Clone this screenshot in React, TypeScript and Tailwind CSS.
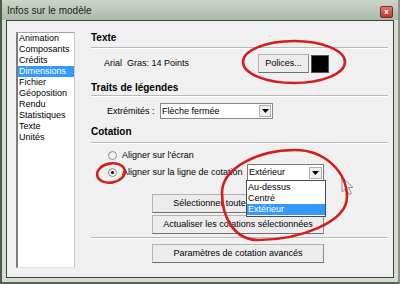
import React from "react";

const items = [
  "Animation",
  "Composants",
  "Crédits",
  "Dimensions",
  "Fichier",
  "Géoposition",
  "Rendu",
  "Statistiques",
  "Texte",
  "Unités",
];

function Arrow() {
  return (
    <svg width="7" height="4" viewBox="0 0 7 4">
      <polygon points="0,0 7,0 3.5,4" fill="#000" />
    </svg>
  );
}

function Separator() {
  return <div className="h-[2px] w-full border-t border-t-[#b9b9b9] border-b border-b-white" />;
}

function Heading({ children }: { children: React.ReactNode }) {
  return <div className="h-[12px] text-[10px] leading-[12px] font-bold text-black">{children}</div>;
}

function Btn({ children, className }: { children: React.ReactNode; className: string }) {
  return (
    <div
      className={
        "flex items-center justify-center whitespace-nowrap overflow-hidden text-[9px] leading-[11px] text-black bg-[#ececec] border border-[#b4b4b4] border-b-[#6f6f6f] border-r-[#8c8c8c] " +
        className
      }
    >
      {children}
    </div>
  );
}

function Radio({ checked }: { checked?: boolean }) {
  return (
    <div className="w-[9px] h-[9px] rounded-full border border-[#8d8d8d] bg-gradient-to-br from-[#e4e4e4] to-white flex items-center justify-center">
      {checked && <div className="w-[3px] h-[3px] rounded-full bg-black" />}
    </div>
  );
}

export default function App() {
  return (
    <div className="relative w-[400px] h-[284px] flex flex-col bg-[#d6dcd4] border-l-2 border-l-[#4e5c4c] border-r-2 border-r-[#8b918a] border-b-2 border-b-[#56654f] font-['Liberation_Sans',Arial,sans-serif] overflow-hidden">
      {/* Title bar */}
      <div className="h-[20px] flex items-start justify-between pl-[5px] pr-[5px] bg-gradient-to-b from-[#cdd5ca] to-[#adb9aa]">
        <span className="mt-[3px] text-[10px] leading-[16px] text-[#1c1c1c]">Infos sur le modèle</span>
        <div className="mt-[6px] w-[13px] h-[12px] rounded-[2px] border border-[#7b2b22] bg-gradient-to-b from-[#e07a6c] to-[#b8392b] flex items-center justify-center">
          <span className="text-[8px] leading-[8px] font-bold text-white">x</span>
        </div>
      </div>

      {/* Client */}
      <div className="flex-1 mx-[4px] mb-[4px] border border-[#3e3e3e] bg-[#f0f0f0] flex pl-[9px] pt-[11px]">
        {/* List */}
        <div className="w-[59px] h-[236px] bg-white border-t border-t-[#a3a3a3] border-l-2 border-l-[#7d7d7d] border-r border-r-[#c9c9c9] border-b border-b-[#e2e2e2]">
          {items.map((it) => (
            <div
              key={it}
              className={
                "h-[11px] leading-[11px] text-[9px] pl-[1px] whitespace-nowrap " +
                (it === "Dimensions" ? "bg-[#3399ff] text-white" : "text-black")
              }
            >
              {it}
            </div>
          ))}
        </div>

        {/* Right panel */}
        <div className="ml-[16px] w-[297px] flex flex-col">
          <Heading>Texte</Heading>
          <div className="mt-[3px]">
            <Separator />
          </div>
          <div className="mt-[5px] h-[19px] flex items-center pl-[13px]">
            <span className="w-[154px] text-[9px] leading-[11px] whitespace-pre text-black">Arial  Gras: 14 Points</span>
            <Btn className="w-[51px] h-[19px]">Polices...</Btn>
            <div className="ml-[2px] w-[18px] h-[18px] bg-black border border-[#555]" />
          </div>

          <div className="mt-[9px]">
            <Heading>Traits de légendes</Heading>
          </div>
          <div className="mt-[1px]">
            <Separator />
          </div>
          <div className="mt-[6px] h-[16px] flex items-center pl-[16px]">
            <span className="w-[53px] text-[9px] leading-[11px] text-black">Extrémités :</span>
            <div className="w-[113px] h-[16px] bg-white border border-[#8a8a8a] flex items-center">
              <span className="flex-1 pl-[1px] text-[9px] leading-[11px] text-black">Flèche fermée</span>
              <div className="mr-[1px] w-[12px] h-[12px] bg-[#f0f0f0] border border-[#b0b0b0] flex items-center justify-center">
                <Arrow />
              </div>
            </div>
          </div>

          <div className="mt-[7px]">
            <Heading>Cotation</Heading>
          </div>
          <div className="mt-[4px]">
            <Separator />
          </div>
          <div className="mt-[6px] h-[11px] flex items-center pl-[17px]">
            <Radio />
            <span className="ml-[5px] text-[9px] leading-[11px] text-black">Aligner sur l'écran</span>
          </div>
          <div className="mt-[3px] h-[17px] flex items-center pl-[17px]">
            <Radio checked />
            <span className="ml-[5px] w-[125px] text-[9px] leading-[11px] text-black whitespace-nowrap">Aligner sur la ligne de cotation</span>
            <div className="relative w-[77px] h-[17px] bg-white border border-[#7a7a7a] flex items-center">
              <span className="flex-1 pl-[1px] text-[9px] leading-[11px] text-black">Extérieur</span>
              <div className="mr-[1px] w-[13px] h-[12px] bg-[#f0f0f0] border border-[#b0b0b0] flex items-center justify-center">
                <Arrow />
              </div>
              <div className="absolute z-10 left-[-2px] top-[15px] w-[80px] h-[37px] bg-white border border-[#4a4a4a] pt-[1px]">
                <div className="h-[11px] leading-[11px] text-[9px] pl-[1px] text-black">Au-dessus</div>
                <div className="h-[11px] leading-[11px] text-[9px] pl-[1px] text-black">Centré</div>
                <div className="h-[11px] leading-[11px] text-[9px] pl-[1px] bg-[#3399ff] text-white">Extérieur</div>
              </div>
            </div>
          </div>

          <Btn className="mt-[13px] ml-[61px] w-[172px] h-[19px]">Sélectionner toutes les cotations</Btn>
          <Btn className="mt-[2px] ml-[61px] w-[172px] h-[19px]">Actualiser les cotations sélectionnées</Btn>
          <div className="mt-[3px]">
            <Separator />
          </div>
          <Btn className="mt-[5px] ml-[61px] w-[172px] h-[19px]">Paramètres de cotation avancés</Btn>
        </div>
      </div>

      {/* Annotations overlay */}
      <svg
        className="absolute left-[-2px] top-0 z-20 pointer-events-none"
        width="400"
        height="284"
        viewBox="0 0 400 284"
      >
        <g transform="translate(342 177)" opacity="0.75">
          <polygon
            points="0,0 0,15 4,11.5 7,17.5 9.5,16.5 6.5,10.5 11,10.5"
            fill="#f4f4f4"
            stroke="#707070"
            strokeWidth="1"
            strokeLinejoin="round"
          />
        </g>
        <ellipse cx="294" cy="62" rx="51" ry="21" fill="none" stroke="#d11f1f" strokeWidth="2.6" />
        <ellipse
          cx="111"
          cy="173"
          rx="14"
          ry="9.5"
          fill="none"
          stroke="#d11f1f"
          strokeWidth="2.6"
          transform="rotate(-10 111 173)"
        />
        <path
          d="M 295 150 C 325 150, 347 172, 347 197 C 347 222, 300 240, 258 240 C 235 240, 222 218, 222 193 C 222 168, 258 150, 295 150 Z"
          fill="none"
          stroke="#d11f1f"
          strokeWidth="2.6"
        />
      </svg>
    </div>
  );
}
